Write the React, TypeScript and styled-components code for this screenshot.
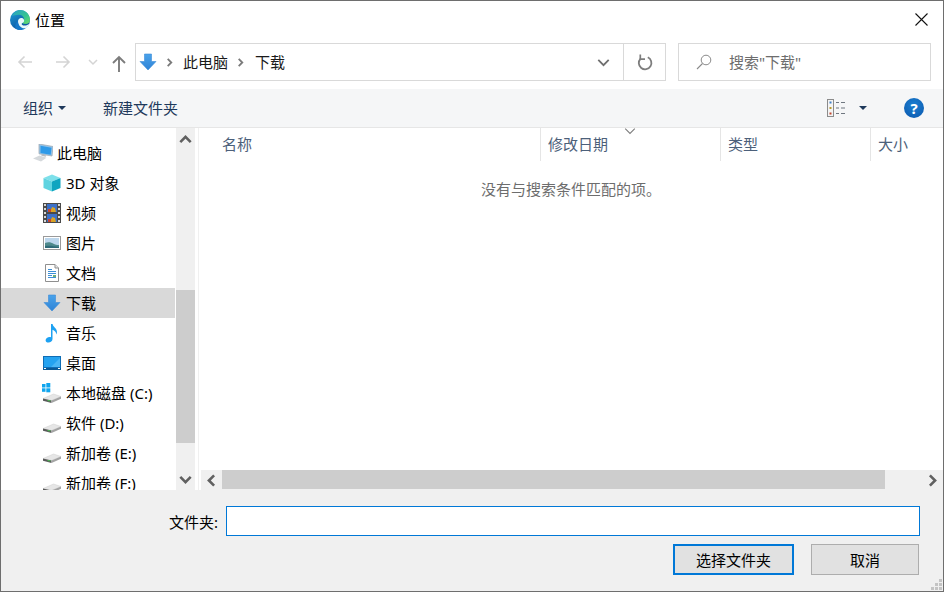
import React from 'react';
import styled, { createGlobalStyle } from 'styled-components';

const GlobalStyle = createGlobalStyle`
    html, body {
        margin: 0;
        padding: 0;
        background: #fff;
    }
    body {
        font-family: "Noto Sans", "Noto Sans CJK SC", sans-serif;
        font-size: 15px;
        color: #000;
    }
`;

const EdgeIcon = () => (
    <svg width="20" height="20" viewBox="0 0 20 20">
        <defs>
            <linearGradient id="edgeBlue" x1="0" y1="0" x2="0.6" y2="1">
                <stop offset="0" stopColor="#1f9fd8" />
                <stop offset="1" stopColor="#0a4f9c" />
            </linearGradient>
            <linearGradient id="edgeGreen" x1="0" y1="0" x2="1" y2="1">
                <stop offset="0" stopColor="#2a9fc8" />
                <stop offset="0.6" stopColor="#35c58f" />
                <stop offset="1" stopColor="#6fdc6a" />
            </linearGradient>
        </defs>
        <circle cx="10" cy="10" r="10" fill="url(#edgeBlue)" />
        <path d="M2 6C4 1.500 8 0 10 0c6 0 10 4.600 10 10 0 2.500-2 4-4.500 4-2 0-3.500-.8-3.500-2 1.500-.2 2.500-1.500 2-3.500C13.500 6 11 4.500 8.500 4.800 6 5 3.500 5.500 2 6z" fill="url(#edgeGreen)" />
        <path d="M8 11.500c0-2.500 2-4 4-3.500 1.800.5 2.500 2 2 3.500-.5 1.300-2 1.500-2.300 2.300-.3 1 1.500 2.200 4 1.700 1.500-.3 2.800-1 3.300-1.800C18.500 17.500 14.500 20 10.500 20 8 20 9 19 9 17c0-2-1-3-1-5.500z" fill="#e9f8fb" />
        <path d="M8 11c-.3 3 1.200 5 3.500 6.500 1.300.8 3 1 4.300.7-1.500 1-3.500 1.800-5.800 1.800-1.500 0-3-.4-4-1.200C4.500 16 5.500 12.500 8 11z" fill="#1578c8" />
    </svg>
);

const DownloadArrow = () => (
    <svg width="18" height="18" viewBox="0 0 18 18">
        <defs>
            <linearGradient id="arrowFill" x1="0" y1="0" x2="0" y2="1">
                <stop offset="0" stopColor="#4aa3ea" />
                <stop offset="1" stopColor="#2f83d6" />
            </linearGradient>
        </defs>
        <path d="M5.500 1h7v7.500H17L9 17 1 8.500h4.500z" fill="url(#arrowFill)" stroke="#3a8bd8" strokeWidth=".6" />
    </svg>
);

const PcIcon = () => (
    <svg width="20" height="18" viewBox="0 0 20 18">
        <path d="M6 0l14 2.500-1 9.500L6 9.800z" fill="#8fc3ea" stroke="#a4acb5" strokeWidth=".8" />
        <path d="M7.500 1.700l11 2-.8 7-10.200-1.700z" fill="#2f9ae8" />
        <path d="M0 14.500l6.500-3 7 2.200-5.500 3.800z" fill="#d5d9dc" />
        <path d="M9 10.500l4.500 1-1 1.200-4.500-1.200z" fill="#b4b9bf" />
    </svg>
);

const CubeIcon = () => (
    <svg width="18" height="18" viewBox="0 0 18 18">
        <path d="M9 .5l8.500 3.500L9 7.500.5 4z" fill="#7de0ea" />
        <path d="M.5 4L9 7.500V17.500L.5 14z" fill="#5fd3e0" />
        <path d="M9 7.500L17.500 4v10L9 17.500z" fill="#0fa5c0" />
    </svg>
);

const VideoIcon = () => (
    <svg width="18" height="20" viewBox="0 0 18 20">
        <rect width="18" height="20" fill="#4a4a4a" />
        <g fill="#d8d8d8">
            <rect x="1" y="1" width="2" height="2" />
            <rect x="1" y="5" width="2" height="2" />
            <rect x="1" y="9" width="2" height="2" />
            <rect x="1" y="13" width="2" height="2" />
            <rect x="1" y="17" width="2" height="2" />
            <rect x="15" y="1" width="2" height="2" />
            <rect x="15" y="5" width="2" height="2" />
            <rect x="15" y="9" width="2" height="2" />
            <rect x="15" y="13" width="2" height="2" />
            <rect x="15" y="17" width="2" height="2" />
        </g>
        <rect x="4" y="1" width="10" height="8" fill="#3c70c8" />
        <rect x="4" y="11" width="10" height="8" fill="#3c70c8" />
        <path d="M7 9l2-5 3 1 1 4z" fill="#d9a324" />
        <path d="M7 19l2-5 3 1 1 4z" fill="#d9a324" />
        <rect x="5" y="6" width="3" height="3" fill="#c8452f" />
        <rect x="5" y="16" width="3" height="3" fill="#c8452f" />
    </svg>
);

const PictureIcon = () => (
    <svg width="18" height="14" viewBox="0 0 18 14">
        <rect x=".5" y=".5" width="17" height="13" fill="#fff" stroke="#9a9a9a" />
        <rect x="2" y="2" width="14" height="10" fill="#bcd6ec" />
        <path d="M2 7c3-1.500 6-1 9 1 2 1 3.500 1.200 5 1v3H2z" fill="#4f8a8c" />
        <path d="M2 10c4-.8 9 0 14 1v1H2z" fill="#2f6a78" />
    </svg>
);

const DocIcon = () => (
    <svg width="14" height="18" viewBox="0 0 14 18">
        <path d="M.5.500h9.500l3.500 3.500v13.500H.5z" fill="#fff" stroke="#8f8f8f" />
        <path d="M10 .5V4h3.500" fill="#e6e6e6" stroke="#8f8f8f" />
        <g stroke="#3d8fd6" strokeWidth="1">
            <path d="M3 5.500h4M3 7.500h8M3 9.500h8M3 11.500h4M3 13.500h8" />
        </g>
        <rect x="8" y="11" width="3" height="2" fill="#6fae7a" />
    </svg>
);

const MusicIcon = () => (
    <svg width="14" height="20" viewBox="0 0 14 20">
        <path d="M6 1h1.600c.3 3 4.400 4 4.400 8 0 1-.3 1.800-.8 2.500.2-2.500-1.800-4-3.700-4.700V16c0 2.200-2 3.500-4 3.500-1.700 0-2.900-.9-2.900-2.300 0-1.900 2-3.200 4-3.200.5 0 1 .1 1.400.2z" fill="#1da1f2" />
    </svg>
);

const DesktopIcon = () => (
    <svg width="18" height="14" viewBox="0 0 18 14">
        <rect width="18" height="13" fill="#0f6db5" />
        <rect x="1" y="1" width="16" height="10" fill="#25a3f0" />
        <path d="M8 11l9-9v9z" fill="#4ab6f5" />
        <rect y="12" width="18" height="2" fill="#0a5a96" />
        <rect x="1" y="12" width="2" height="1" fill="#fff" />
        <rect x="15" y="12" width="2" height="1" fill="#fff" />
    </svg>
);

const DriveIcon = ({ windows }: { windows?: boolean }) => (
    <svg width="20" height="20" viewBox="0 0 20 20">
        {windows && (
            <g fill="#10a5ee">
                <rect x="0" y="1" width="3.500" height="3.500" />
                <rect x="4.300" y="0" width="4" height="4.500" />
                <rect x="0" y="5.300" width="3.500" height="3.500" />
                <rect x="4.300" y="5.300" width="4" height="4" />
            </g>
        )}
        <path d="M1 15.500L11.500 11 19 13.500 9.500 17.500z" fill="#e6e6e6" stroke="#cfcfcf" strokeWidth=".5" />
        <path d="M1 15.500l8.500 2V20L1 17.700z" fill="#5a5a5a" />
        <path d="M9.500 17.500L19 13.500v2.300L9.500 20z" fill="#a4a4a4" />
        <rect x="5.500" y="17" width="3" height="1.300" fill="#4fae58" />
    </svg>
);

const Chevron = ({ dir, color = '#6f6f6f', size = 10, weight = 2 }: { dir: 'up' | 'down' | 'left' | 'right'; color?: string; size?: number; weight?: number }) => {
    const paths = {
        up: 'M1 7l4-4 4 4',
        down: 'M1 3l4 4 4-4',
        left: 'M7 1L3 5l4 4',
        right: 'M3 1l4 4-4 4',
    };
    return (
        <svg width={size} height={size} viewBox="0 0 10 10">
            <path d={paths[dir]} fill="none" stroke={color} strokeWidth={weight} />
        </svg>
    );
};

const NavArrow = ({ flip, color }: { flip?: boolean; color: string }) => (
    <svg width="16" height="14" viewBox="0 0 16 14" style={flip ? { transform: 'scaleX(-1)' } : undefined}>
        <path d="M15 7H2M7.500 1.500L2 7l5.500 5.500" fill="none" stroke={color} strokeWidth="1.600" />
    </svg>
);

const UpArrow = () => (
    <svg width="14" height="17" viewBox="0 0 14 17">
        <path d="M7 17V2M1 8l6-6 6 6" fill="none" stroke="#7c7c7c" strokeWidth="1.900" />
    </svg>
);

const Refresh = () => (
    <svg width="16" height="17" viewBox="0 0 16 17">
        <path d="M10.800 3.300A6.300 6.300 0 1 1 3.600 4.600" fill="none" stroke="#7d7d7d" strokeWidth="1.800" />
        <path d="M3.300 .6V5.100H8" fill="none" stroke="#7d7d7d" strokeWidth="1.700" />
    </svg>
);

const SearchGlass = () => (
    <svg width="16" height="16" viewBox="0 0 16 16">
        <circle cx="10" cy="6" r="4.800" fill="none" stroke="#8a8a8a" />
        <path d="M6.500 9.500L1 15" stroke="#8a8a8a" strokeWidth="1.100" />
    </svg>
);

const ViewIcon = () => (
    <svg width="19" height="18" viewBox="0 0 19 18">
        <rect x=".5" y=".5" width="6" height="17" fill="#f4f4f4" stroke="#8b8b8b" />
        <rect x="2.500" y="2.500" width="2" height="2" fill="#3f7fc6" />
        <rect x="2.500" y="8" width="2" height="2" fill="#b79a2f" />
        <rect x="2.500" y="13.500" width="2" height="2" fill="#c0452c" />
        <path d="M9 3.500h3M14 3.500h4M9 9h3M14 9h4M9 14.500h3M14 14.500h4" stroke="#6f7780" />
    </svg>
);

const CloseIcon = () => (
    <svg width="13" height="13" viewBox="0 0 13 13">
        <path d="M.5.5l12 12M12.500.5l-12 12" stroke="#111" strokeWidth="1.100" />
    </svg>
);

type Place = { label: string; icon: React.ReactNode; root?: boolean; selected?: boolean };

const places: Place[] = [
    { label: '此电脑', icon: <PcIcon />, root: true },
    { label: '3D 对象', icon: <CubeIcon /> },
    { label: '视频', icon: <VideoIcon /> },
    { label: '图片', icon: <PictureIcon /> },
    { label: '文档', icon: <DocIcon /> },
    { label: '下载', icon: <DownloadArrow />, selected: true },
    { label: '音乐', icon: <MusicIcon /> },
    { label: '桌面', icon: <DesktopIcon /> },
    { label: '本地磁盘 (C:)', icon: <DriveIcon windows /> },
    { label: '软件 (D:)', icon: <DriveIcon /> },
    { label: '新加卷 (E:)', icon: <DriveIcon /> },
    { label: '新加卷 (F:)', icon: <DriveIcon /> },
];

const columns = [
    { label: '名称', width: 342 },
    { label: '修改日期', width: 180, sorted: true },
    { label: '类型', width: 150 },
    { label: '大小', width: 72 },
];

export default function App() {
    return (
        <Dialog>
            <GlobalStyle />
            <TitleBar>
                <TitleLeft>
                    <EdgeIcon />
                    <span>位置</span>
                </TitleLeft>
                <CloseButton><CloseIcon /></CloseButton>
            </TitleBar>

            <NavRow>
                <NavButtons>
                    <NavArrow color="#d4d4d4" />
                    <NavArrow flip color="#d4d4d4" />
                    <Chevron dir="down" color="#d4d4d4" size={10} weight={1.500} />
                    <UpArrow />
                </NavButtons>
                <AddressBar>
                    <Crumbs>
                        <DownloadArrow />
                        <CrumbGap $width={26}><Chevron dir="right" size={9} color="#7a7a7a" /></CrumbGap>
                        <RaisedText>此电脑</RaisedText>
                        <CrumbGap $width={27}><Chevron dir="right" size={9} color="#7a7a7a" /></CrumbGap>
                        <RaisedText>下载</RaisedText>
                    </Crumbs>
                    <AddressDrop><Chevron dir="down" size={13} color="#6f6f6f" weight={1.400} /></AddressDrop>
                    <RefreshBox><Refresh /></RefreshBox>
                </AddressBar>
                <SearchBox>
                    <SearchGlass />
                    <RaisedText>搜索"下载"</RaisedText>
                </SearchBox>
            </NavRow>

            <CommandBar>
                <CommandLeft>
                    <OrganizeButton><RaisedText>组织</RaisedText><Caret /></OrganizeButton>
                    <RaisedText>新建文件夹</RaisedText>
                </CommandLeft>
                <CommandRight>
                    <ViewIcon />
                    <Caret />
                    <HelpButton>?</HelpButton>
                </CommandRight>
            </CommandBar>

            <Main>
                <Sidebar>
                    <PlaceList>
                        {places.map((p) => (
                            <PlaceRow key={p.label} $root={p.root} $selected={p.selected}>
                                <PlaceIcon>{p.icon}</PlaceIcon>
                                <RaisedText>{p.label}</RaisedText>
                            </PlaceRow>
                        ))}
                    </PlaceList>
                    <VScroll>
                        <ScrollEnd $height={22}><Chevron dir="up" size={13} color="#606060" weight={2} /></ScrollEnd>
                        <VTrack>
                            <VThumb />
                        </VTrack>
                        <ScrollEnd $height={22}><Chevron dir="down" size={13} color="#606060" weight={2} /></ScrollEnd>
                    </VScroll>
                </Sidebar>
                <Content>
                    <HeaderRow>
                        {columns.map((c) => (
                            <HeaderCell key={c.label} $width={c.width}>
                                {c.sorted && <SortMark><Chevron dir="down" size={12} color="#7d7d7d" weight={.9} /></SortMark>}
                                {c.label}
                            </HeaderCell>
                        ))}
                    </HeaderRow>
                    <EmptyArea>
                        <EmptyText>没有与搜索条件匹配的项。</EmptyText>
                    </EmptyArea>
                    <HScroll>
                        <HEnd><Chevron dir="left" size={13} color="#606060" weight={2} /></HEnd>
                        <HThumb />
                        <HTrack />
                        <HEnd><Chevron dir="right" size={13} color="#606060" weight={2} /></HEnd>
                    </HScroll>
                </Content>
            </Main>

            <Footer>
                <FieldRow>
                    <FieldLabel>文件夹:</FieldLabel>
                    <FieldInput />
                </FieldRow>
                <ButtonRow>
                    <PrimaryButton>选择文件夹</PrimaryButton>
                    <SecondaryButton>取消</SecondaryButton>
                </ButtonRow>
                <Grip>
                    <svg width="11" height="11" viewBox="0 0 11 11" fill="#c4c4c4">
                        <rect x="8" y="0" width="3" height="3" />
                        <rect x="4" y="4" width="3" height="3" />
                        <rect x="8" y="4" width="3" height="3" />
                        <rect x="0" y="8" width="3" height="3" />
                        <rect x="4" y="8" width="3" height="3" />
                        <rect x="8" y="8" width="3" height="3" />
                    </svg>
                </Grip>
            </Footer>
        </Dialog>
    );
}

const Dialog = styled.div`
    position: relative;
    width: 944px;
    height: 592px;
    box-sizing: border-box;
    border: 1px solid #6e6e6e;
    display: flex;
    flex-direction: column;
    overflow: hidden;
    background: #fff;
`
const TitleBar = styled.div`
    height: 37px;
    display: flex;
    align-items: center;
    justify-content: space-between;
    padding: 0 15px 0 9px;
`
const TitleLeft = styled.div`
    display: flex;
    align-items: center;
    gap: 5px;
`
const CloseButton = styled.div`
    display: flex;
    width: 13px;
    height: 13px;
`
const RaisedText = styled.span`
    padding-bottom: 2px;
    white-space: nowrap;
`
const NavRow = styled.div`
    height: 51px;
    box-sizing: border-box;
    padding-top: 5px;
    display: flex;
    align-items: flex-start;
`
const NavButtons = styled.div`
    width: 134px;
    height: 38px;
    box-sizing: border-box;
    padding-left: 16px;
    display: flex;
    align-items: center;
    & > svg:nth-child(2) { margin-left: 22px; }
    & > svg:nth-child(3) { margin-left: 17px; }
    & > svg:nth-child(4) { margin-left: 14px; margin-top: 3px; }
`
const AddressBar = styled.div`
    width: 531px;
    height: 38px;
    box-sizing: border-box;
    border: 1px solid #d9d9d9;
    display: flex;
    align-items: stretch;
`
const Crumbs = styled.div`
    flex: 1;
    display: flex;
    align-items: center;
    padding-left: 3px;
    color: #1a1a1a;
`
const CrumbGap = styled.span<{ $width: number }>`
    display: flex;
    width: ${(p) => p.$width}px;
    padding-left: 8px;
    box-sizing: border-box;
`
const AddressDrop = styled.div`
    width: 40px;
    display: flex;
    align-items: center;
    justify-content: center;
`
const RefreshBox = styled.div`
    width: 41px;
    border-left: 1px solid #d9d9d9;
    display: flex;
    align-items: center;
    justify-content: center;
`
const SearchBox = styled.div`
    width: 253px;
    height: 38px;
    margin-left: 12px;
    box-sizing: border-box;
    border: 1px solid #d9d9d9;
    padding-left: 17px;
    display: flex;
    align-items: center;
    gap: 17px;
    color: #6d6d6d;
`
const CommandBar = styled.div`
    height: 39px;
    box-sizing: border-box;
    background: #f5f6f7;
    border-bottom: 1px solid #e6e6e6;
    display: flex;
    align-items: center;
    justify-content: space-between;
    padding: 0 19px 0 22px;
    color: #1e395b;
`
const CommandLeft = styled.div`
    display: flex;
    align-items: center;
    gap: 37px;
`
const OrganizeButton = styled.div`
    display: flex;
    align-items: center;
    gap: 5px;
`
const Caret = styled.span`
    display: inline-block;
    width: 0;
    height: 0;
    border-left: 4px solid transparent;
    border-right: 4px solid transparent;
    border-top: 4px solid #1e395b;
`
const CommandRight = styled.div`
    display: flex;
    align-items: center;
    & > span:nth-child(2) { margin-left: 13px; }
`
const HelpButton = styled.div`
    width: 20px;
    height: 20px;
    margin-left: 37px;
    border-radius: 50%;
    background: radial-gradient(circle at 50% 35%, #1b7fd1, #0a56ac);
    color: #fff;
    font-weight: 700;
    font-size: 15px;
    line-height: 20px;
    text-align: center;
`
const Main = styled.div`
    height: 362px;
    display: flex;
`
const Sidebar = styled.div`
    width: 198px;
    flex-shrink: 0;
    display: flex;
    border-right: 1px solid #f0f0f0;
    padding-right: 3px;
    box-sizing: border-box;
`
const PlaceList = styled.div`
    width: 174px;
    height: 362px;
    margin-right: 1px;
    overflow: hidden;
    padding-top: 10px;
    box-sizing: border-box;
`
const PlaceRow = styled.div<{ $root?: boolean; $selected?: boolean }>`
    height: 30px;
    display: flex;
    align-items: center;
    padding-left: ${(p) => (p.$root ? 32 : 41)}px;
    background: ${(p) => (p.$selected ? '#d9d9d9' : 'transparent')};
`
const PlaceIcon = styled.span`
    width: 20px;
    height: 20px;
    margin-right: 4px;
    display: flex;
    align-items: center;
    justify-content: center;
`
const VScroll = styled.div`
    width: 19px;
    background: #f0f0f0;
    display: flex;
    flex-direction: column;
`
const ScrollEnd = styled.div<{ $height: number }>`
    height: ${(p) => p.$height}px;
    display: flex;
    align-items: center;
    justify-content: center;
`
const VTrack = styled.div`
    flex: 1;
    padding-top: 140px;
    box-sizing: border-box;
`
const VThumb = styled.div`
    height: 153px;
    background: #cdcdcd;
`
const Content = styled.div`
    flex: 1;
    min-width: 0;
    display: flex;
    flex-direction: column;
`
const HeaderRow = styled.div`
    height: 33px;
    display: flex;
    color: #4c607a;
`
const HeaderCell = styled.div<{ $width: number }>`
    position: relative;
    width: ${(p) => p.$width}px;
    box-sizing: border-box;
    padding-left: 7px;
    line-height: 33px;
    border-right: 1px solid #e5e5e5;
    &:first-child { padding-left: 23px; }
    &:last-child { border-right: 0; }
`
const SortMark = styled.span`
    position: absolute;
    left: 83px;
    top: -3px;
    display: flex;
`
const EmptyArea = styled.div`
    flex: 1;
    display: flex;
    justify-content: center;
`
const EmptyText = styled.div`
    margin-top: 17px;
    color: #6d6d6d;
`
const HScroll = styled.div`
    height: 20px;
    margin-left: 2px;
    display: flex;
    background: #f0f0f0;
`
const HEnd = styled.div`
    width: 21px;
    display: flex;
    align-items: center;
    justify-content: center;
`
const HThumb = styled.div`
    width: 663px;
    height: 19px;
    background: #cdcdcd;
`
const HTrack = styled.div`
    flex: 1;
`
const Footer = styled.div`
    position: relative;
    flex: 1;
    background: #f0f0f0;
    padding-top: 16px;
    box-sizing: border-box;
`
const FieldRow = styled.div`
    display: flex;
    align-items: center;
    height: 30px;
    padding-left: 168px;
`
const FieldLabel = styled.label`
    width: 57px;
`
const FieldInput = styled.input`
    width: 694px;
    height: 30px;
    box-sizing: border-box;
    border: 1px solid #0078d7;
    outline: 0;
    background: #fff;
    padding: 0 2px;
`
const ButtonRow = styled.div`
    display: flex;
    margin-top: 8px;
    padding-left: 672px;
    gap: 17px;
`
const PrimaryButton = styled.button`
    width: 121px;
    height: 31px;
    box-sizing: border-box;
    border: 2px solid #0078d7;
    background: #e1e1e1;
    font: inherit;
    color: #000;
    padding: 0;
`
const SecondaryButton = styled.button`
    width: 108px;
    height: 31px;
    box-sizing: border-box;
    border: 1px solid #adadad;
    background: #e1e1e1;
    font: inherit;
    color: #000;
    padding: 0;
`
const Grip = styled.div`
    position: absolute;
    right: 1px;
    bottom: 1px;
    display: flex;
`
